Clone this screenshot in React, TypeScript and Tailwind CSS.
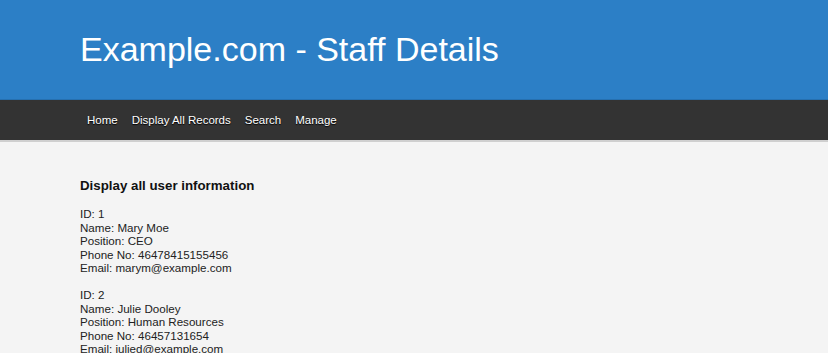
export default function App() {
  const staff = [
    { id: 1, name: "Mary Moe", position: "CEO", phone: "46478415155456", email: "marym@example.com" },
    { id: 2, name: "Julie Dooley", position: "Human Resources", phone: "46457131654", email: "julied@example.com" },
  ];

  return (
    <div className="min-h-screen bg-[#f4f4f4] font-['Liberation_Sans',Arial,sans-serif] text-[#222]">
      <header className="h-[100px] bg-[#2c7fc6] border-b border-[#2670b0] px-20 pt-[26px]">
        <h1 className="text-[34px] leading-[46px] text-white">Example.com - Staff Details</h1>
      </header>

      <nav className="h-[42px] bg-[#333333] border-b-2 border-[#cfcfcf] flex items-center px-[80px] pt-[2px]">
        {["Home", "Display All Records", "Search", "Manage"].map((item) => (
          <a
            key={item}
            href="#"
            className="px-[7px] text-[11.5px] text-white [text-shadow:0_1px_1px_#000]"
          >
            {item}
          </a>
        ))}
      </nav>

      <main className="px-20 pt-[36px]">
        <h2 className="text-[13.3px] font-bold leading-[16px] text-[#111] mb-[13px]">Display all user information</h2>
        <div className="text-[11.6px] leading-[13.5px]">
          {staff.map((s, i) => (
            <p key={s.id} className={i > 0 ? "mt-[13.5px]" : ""}>
              ID: {s.id}
              <br />
              Name: {s.name}
              <br />
              Position: {s.position}
              <br />
              Phone No: {s.phone}
              <br />
              Email: {s.email}
            </p>
          ))}
        </div>
      </main>
    </div>
  );
}
